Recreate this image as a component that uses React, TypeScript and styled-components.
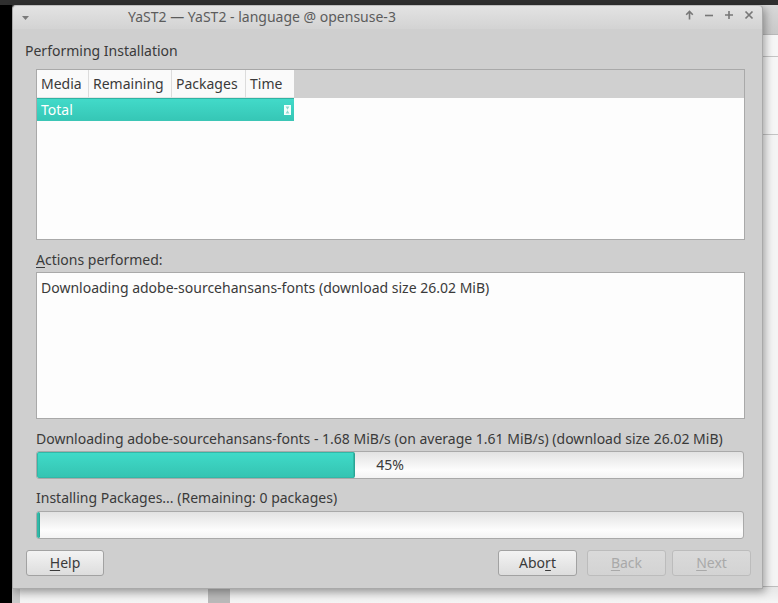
import React from "react";
import styled, { createGlobalStyle } from "styled-components";

const Global = createGlobalStyle`
  html, body { margin: 0; padding: 0; background: #2d2d2d; }
  * { box-sizing: border-box; }
  body { font-family: "Noto Sans", "Open Sans", sans-serif; font-size: 14px; color: #3a3a3a; }
`;

const Desktop = styled.div`
  position: relative;
  width: 778px;
  height: 603px;
  overflow: hidden;
  background: #2f2f2f;
`;

const LeftStrip = styled.div`
  position: absolute;
  left: 0; top: 5px; bottom: 0;
  width: 12px;
  background: #000;
`;

const BackWindowRight = styled.div`
  position: absolute;
  left: 755px; top: 5px;
  width: 40px; height: 600px;
  background: #f4f4f4;
  display: flex;
  flex-direction: column;
`;

const BackHeader = styled.div`
  height: 30px;
  background: linear-gradient(#d8d8d8, #c9c9c9);
  border-bottom: 1px solid #b8b8b8;
`;

const BackLine = styled.div<{ $h: number }>`
  height: ${(p) => p.$h}px;
  border-bottom: 1px solid #c4c4c4;
  background: #f6f6f6;
`;

const BackWindowBottom = styled.div`
  position: absolute;
  left: 12px; top: 586px;
  width: 766px; height: 20px;
  background: #c9c9c9;
  display: grid;
  grid-template-columns: 8px 188px 22px 1fr;
`;

const BottomCell = styled.div<{ $bg: string }>`
  background: ${(p) => p.$bg};
  border-top: 1px solid #bdbdbd;
`;

const Window = styled.div`
  position: absolute;
  left: 12px; top: 5px;
  width: 751px; height: 584px;
  background: #cfcfcf;
  border: 1px solid #a9a9a9;
  border-top-color: #bdbdbd;
  border-radius: 4px 4px 0 0;
  box-shadow: 2px 3px 8px rgba(0,0,0,0.35);
  display: flex;
  flex-direction: column;
`;

const TitleBar = styled.div`
  height: 23px;
  flex: none;
  background: linear-gradient(#e3e3e3, #d3d3d3);
  display: flex;
  align-items: center;
  padding: 0 8px 0 8px;
  border-radius: 4px 4px 0 0;
`;

const TitleText = styled.div`
  flex: 1;
  color: #5c5c5c;
  font-size: 14px;
  padding-left: 98px;
  margin-top: -2px;
  white-space: nowrap;
`;

const TitleButtons = styled.div`
  display: flex;
  gap: 10px;
  align-items: center;
  margin-top: -5px;
`;

const Body = styled.div`
  flex: 1;
  display: flex;
  flex-direction: column;
  padding: 12px 12px 14px 12px;
`;

const Heading = styled.div`
  line-height: 20px;
  height: 18px;
  margin-bottom: 10px;
  white-space: nowrap;
`;

const Inner = styled.div`
  display: flex;
  flex-direction: column;
  padding: 0 5px 0 11px;
`;

const Table = styled.div`
  height: 171px;
  border: 1px solid #a9a9a9;
  background: #fdfdfd;
  display: flex;
  flex-direction: column;
`;

const HeaderRow = styled.div`
  height: 28px;
  background: #d0d0d0;
  display: flex;
`;

const HeaderCell = styled.div<{ $w: number }>`
  width: ${(p) => p.$w}px;
  background: #fafafa;
  border-right: 1px solid #dcdcdc;
  border-bottom: 1px solid #e6e6e6;
  padding: 5px 0 0 4px;
  line-height: 18px;
  white-space: nowrap;
  &:last-child { border-right: none; }
`;

const SelectedRow = styled.div`
  width: 257px;
  height: 23px;
  background: linear-gradient(#42dac9, #36c7b6);
  border-top: 1px solid #2fb3a3;
  border-bottom: 1px solid #3cc6b6;
  color: #fff;
  display: flex;
  align-items: center;
  justify-content: space-between;
  padding: 0 3px 0 4px;
`;

const Label = styled.div<{ $mt: number; $mb: number }>`
  line-height: 20px;
  height: 18px;
  margin-top: ${(p) => p.$mt}px;
  margin-bottom: ${(p) => p.$mb}px;
  white-space: nowrap;
`;

const LogBox = styled.div`
  height: 147px;
  background: #fdfdfd;
  border: 1px solid #a9a9a9;
  padding: 6px 4px;
  line-height: 18px;
  white-space: nowrap;
`;

const Progress = styled.div`
  position: relative;
  height: 28px;
  border: 1px solid #a9a9a9;
  border-radius: 3px;
  background: linear-gradient(#e2e2e2, #fdfdfd 70%, #f4f4f4);
  display: flex;
  overflow: hidden;
  margin-right: 1px;
`;

const Fill = styled.div`
  height: 100%;
  background: linear-gradient(#40dbc9, #34c3b1);
  border-right: 1px solid #2aa595;
  border-radius: 2px;
  box-shadow: inset 0 0 0 1px #31b8a7;
`;

const ProgressText = styled.div`
  position: absolute;
  inset: 0;
  display: flex;
  align-items: center;
  justify-content: center;
  line-height: 18px;
  color: #3a3a3a;
`;

const ButtonRow = styled.div`
  display: flex;
  align-items: center;
  margin-top: 11px;
  margin-right: -1px;
  padding: 0 0 0 1px;
`;

const Spacer = styled.div`
  flex: 1;
`;

const Button = styled.div<{ $disabled?: boolean; $w?: number }>`
  width: ${(p) => p.$w ?? 79}px;
  height: 26px;
  border: 1px solid ${(p) => (p.$disabled ? "#bcbcbc" : "#a2a2a2")};
  border-radius: 3px;
  background: ${(p) => (p.$disabled ? "linear-gradient(#dadada, #d3d3d3)" : "linear-gradient(#f3f3f3, #dddddd)")};
  color: ${(p) => (p.$disabled ? "#a9a9a9" : "#3a3a3a")};
  display: flex;
  align-items: center;
  justify-content: center;
  line-height: 18px;
`;

const ButtonGroup = styled.div`
  display: flex;
  gap: 10px;
  & > :last-child { margin-left: -4px; }
`;

const U = styled.span`
  text-decoration: underline;
  text-underline-offset: 2px;
`;

const cols = [
  { name: "Media", w: 52 },
  { name: "Remaining", w: 83 },
  { name: "Packages", w: 74 },
  { name: "Time", w: 48 },
];

const Hourglass = () => (
  <svg width="7" height="10" viewBox="0 0 7 10">
    <rect x="0.5" y="0.5" width="6" height="9" fill="#f4fffd" stroke="#f4fffd" strokeWidth="1" />
    <path d="M1.6 1.6 L5.4 1.6 L3.5 4.8 Z M1.6 8.4 L5.4 8.4 L3.5 5.2 Z" fill="#8fd8cf" />
  </svg>
);

const TriDown = () => (
  <svg width="9" height="6" viewBox="0 0 9 6">
    <path d="M1 1 L8 1 L4.5 5 Z" fill="#7a7a7a" />
  </svg>
);

const IconUp = () => (
  <svg width="9" height="10" viewBox="0 0 9 10">
    <path d="M4.5 9.5V1.5M1.2 4.8L4.5 1.5L7.8 4.8" stroke="#777" strokeWidth="1.6" fill="none" />
  </svg>
);
const IconMin = () => (
  <svg width="10" height="10" viewBox="0 0 10 10">
    <path d="M1 5.5H9" stroke="#777" strokeWidth="1.6" />
  </svg>
);
const IconMax = () => (
  <svg width="10" height="10" viewBox="0 0 10 10">
    <path d="M1 5H9M5 1V9" stroke="#777" strokeWidth="1.6" />
  </svg>
);
const IconClose = () => (
  <svg width="10" height="10" viewBox="0 0 10 10">
    <path d="M1.5 1.5L8.5 8.5M8.5 1.5L1.5 8.5" stroke="#777" strokeWidth="1.7" />
  </svg>
);

export default function App() {
  return (
    <>
      <Global />
      <Desktop>
        <LeftStrip />
        <BackWindowRight>
          <BackHeader />
          <BackLine $h={22} />
          <BackLine $h={78} />
        </BackWindowRight>
        <BackWindowBottom>
          <BottomCell $bg="#c9c9c9" />
          <BottomCell $bg="linear-gradient(#e6e6e6, #f8f8f8)" />
          <BottomCell $bg="#b9b9b9" />
          <BottomCell $bg="linear-gradient(#e6e6e6, #f8f8f8)" />
        </BackWindowBottom>
        <Window>
          <TitleBar>
            <TriDown />
            <TitleText>YaST2 — YaST2 - language @ opensuse-3</TitleText>
            <TitleButtons>
              <IconUp />
              <IconMin />
              <IconMax />
              <IconClose />
            </TitleButtons>
          </TitleBar>
          <Body>
            <Heading>Performing Installation</Heading>
            <Inner>
              <Table>
                <HeaderRow>
                  {cols.map((c) => (
                    <HeaderCell key={c.name} $w={c.w}>{c.name}</HeaderCell>
                  ))}
                </HeaderRow>
                <SelectedRow>
                  <span>Total</span>
                  <Hourglass />
                </SelectedRow>
              </Table>
              <Label $mt={10} $mb={4}><U>A</U>ctions performed:</Label>
              <LogBox>Downloading adobe-sourcehansans-fonts (download size 26.02 MiB)</LogBox>
              <Label $mt={10} $mb={4}>
                Downloading adobe-sourcehansans-fonts - 1.68 MiB/s (on average 1.61 MiB/s) (download size 26.02 MiB)
              </Label>
              <Progress>
                <Fill style={{ width: "45%" }} />
                <ProgressText>45%</ProgressText>
              </Progress>
              <Label $mt={9} $mb={5}>Installing Packages... (Remaining: 0 packages)</Label>
              <Progress>
                <Fill style={{ width: "3px" }} />
              </Progress>
            </Inner>
            <ButtonRow>
              <Button $w={78}><U>H</U>elp</Button>
              <Spacer />
              <ButtonGroup>
                <Button>Abo<U>r</U>t</Button>
                <Button $disabled><U>B</U>ack</Button>
                <Button $disabled><U>N</U>ext</Button>
              </ButtonGroup>
            </ButtonRow>
          </Body>
        </Window>
      </Desktop>
    </>
  );
}
